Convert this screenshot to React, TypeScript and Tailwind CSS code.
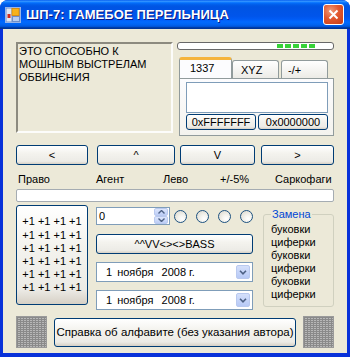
import React from 'react';

const BTN =
  'flex items-center justify-center rounded-[3px] border border-[#003c74] bg-[linear-gradient(180deg,#ffffff_0%,#f4f3ee_40%,#ecebe6_85%,#d6d0c5_100%)] text-black';

const CHECKER =
  'bg-[#8a8a8a] bg-[linear-gradient(90deg,#8a8a8a_1px,transparent_1px),linear-gradient(#8a8a8a_1px,transparent_1px)] bg-[size:3px_2px] bg-[color:#b8b8b8] border border-[#9a9a9a]';

function Radio() {
  return (
    <span className="w-[13px] h-[13px] rounded-full border border-[#1c5180] bg-[radial-gradient(circle_at_65%_70%,#ffffff_0%,#f4f3ee_35%,#d8d5c9_100%)]" />
  );
}

function Chevron() {
  return (
    <svg width="8" height="5" viewBox="0 0 8 5">
      <path d="M1 0.8 L4 3.8 L7 0.8" fill="none" stroke="#4d6185" strokeWidth="1.6" />
    </svg>
  );
}

function DateBox() {
  return (
    <div className="flex items-center h-[20px] border border-[#7f9db9] bg-white">
      <span className="pl-[9px]">1</span>
      <span className="ml-[5px]">ноября</span>
      <span className="ml-[8px]">2008 г.</span>
      <span className="ml-auto mr-[2px] w-[14px] h-[14px] rounded-[2px] border border-[#b9c9ef] bg-[linear-gradient(180deg,#d5e0fb,#b7c9f6)] flex items-center justify-center">
        <Chevron />
      </span>
    </div>
  );
}

export default function App() {
  const words = ['буковки', 'циферки', 'буковки', 'циферки', 'буковки', 'циферки'];
  return (
    <div className="w-[350px] h-[357px] font-['Liberation_Sans',sans-serif] text-[11px] leading-[13px] text-black">
      <div className="flex flex-col h-full rounded-t-[8px] overflow-hidden bg-[#0831d9]">
        {/* Title bar */}
        <div className="h-[29px] flex items-center px-[5px] bg-[linear-gradient(180deg,#0058ee_0%,#3593ff_4%,#288eff_6%,#127dff_8%,#036ffc_10%,#0262ee_14%,#0057e5_20%,#0054e3_24%,#0055eb_56%,#005bf5_66%,#026afe_76%,#0062ef_86%,#0052d6_92%,#0040ab_94%,#003092_100%)]">
          <svg width="16" height="16" viewBox="0 0 16 16" className="mt-[1px]">
            <rect x="0.5" y="0.5" width="15" height="15" fill="#6f8fc9" stroke="#9ab4e6" />
            <rect x="1.5" y="1.5" width="5" height="13" fill="#dfe6f3" />
            <rect x="2.5" y="7" width="3" height="4" fill="#d22a1e" />
            <rect x="7" y="1.5" width="7" height="7" fill="#f7b21c" stroke="#e08a00" strokeWidth="0.8" />
            <rect x="8" y="10" width="6" height="4" fill="#b9cdf0" />
          </svg>
          <span className="ml-[5px] text-white font-bold text-[13px] tracking-[0.1px] [text-shadow:1px_1px_#0a1883]">
            ШП-7: ГАМЕБОЕ ПЕРЕЛЬНИЦА
          </span>
          <div className="ml-auto mr-[1px] w-[21px] h-[21px] rounded-[3px] border border-white bg-[radial-gradient(circle_at_35%_30%,#f09a78_0%,#e2582f_45%,#c63c17_100%)] flex items-center justify-center">
            <svg width="11" height="11" viewBox="0 0 11 11">
              <path d="M1.5 1.5 L9.5 9.5 M9.5 1.5 L1.5 9.5" stroke="white" strokeWidth="2" />
            </svg>
          </div>
        </div>

        {/* Body */}
        <div className="flex-1 mx-[3px] mb-[4px] bg-[#ece9d8] pt-[13px] px-[13px]">
          {/* Row 1 */}
          <div className="flex h-[94px]">
            <div className="w-[157px] h-[91px] border-2 border-t-[#8c8a7f] border-l-[#8c8a7f] border-b-[#fcfcfa] border-r-[#fcfcfa] pl-[1px] pt-[1px] leading-[13px]">
              ЭТО СПОСОБНО К<br />МОШНЫМ ВЫСТРЕЛАМ<br />ОБВИНЄНИЯ
            </div>
            <div className="ml-[4px] w-[157px] flex flex-col">
              <div className="h-[8px] rounded-[3px] border border-[#686868] bg-white flex items-center pl-[99px] gap-[2px]">
                {[0, 1, 2, 3, 4].map((i) => (
                  <span key={i} className="w-[6px] h-[4px] bg-[#37d237]" />
                ))}
              </div>
              <div className="mt-[7px] flex items-end h-[21px] pl-[2px]">
                <div className="w-[53px] h-[21px] rounded-t-[3px] border-x border-[#919b9c] border-t-[3px] border-t-[#f5b43c] bg-[#fcfcfe] pl-[10px] pt-[2px] relative z-10">
                  1337
                </div>
                <div className="w-[47px] h-[18px] rounded-t-[3px] border border-b-0 border-[#919b9c] bg-[linear-gradient(180deg,#ffffff,#ecebe6)] pl-[8px] pt-[3px]">
                  XYZ
                </div>
                <div className="ml-[2px] w-[47px] h-[18px] rounded-t-[3px] border border-b-0 border-[#919b9c] bg-[linear-gradient(180deg,#ffffff,#ecebe6)] pl-[6px] pt-[3px]">
                  -/+
                </div>
              </div>
              <div className="ml-[2px] w-[155px] h-[58px] border border-[#919b9c] bg-[linear-gradient(180deg,#fcfcfe,#f4f3ee)] pl-[6px] pt-[3px]">
                <div className="w-[142px] h-[31px] border border-[#7f9db9] bg-white" />
                <div className="mt-[1px] flex gap-[2px]">
                  <div className={`${BTN} w-[70px] h-[16px]`}>0xFFFFFFF</div>
                  <div className={`${BTN} w-[70px] h-[16px]`}>0x0000000</div>
                </div>
              </div>
            </div>
          </div>

          {/* Row 2 */}
          <div className="mt-[9px] flex h-[20px]">
            <div className={`${BTN} w-[72px]`}>&lt;</div>
            <div className={`${BTN} w-[78px] ml-[9px]`}>^</div>
            <div className={`${BTN} w-[75px] ml-[5px]`}>V</div>
            <div className={`${BTN} w-[73px] ml-[6px]`}>&gt;</div>
          </div>

          {/* Labels */}
          <div className="mt-[8px] flex h-[13px] pl-[2px]">
            <span className="w-[78px]">Право</span>
            <span className="w-[67px]">Агент</span>
            <span className="w-[57px]">Лево</span>
            <span className="w-[55px]">+/-5%</span>
            <span>Саркофаги</span>
          </div>

          <div className="mt-[3px] h-[13px] rounded-[2px] border border-[#a5acb2] bg-white" />

          {/* Row 5 */}
          <div className="mt-[3px] flex">
            <div className={`${BTN} w-[72px] h-[100px] flex-col`}>
              {[0, 1, 2, 3, 4, 5].map((i) => (
                <span key={i} className="leading-[13.2px] whitespace-pre">+1 +1 +1 +1</span>
              ))}
            </div>

            <div className="ml-[8px] w-[157px] pt-[2px]">
              <div className="flex items-center h-[18px]">
                <div className="w-[74px] h-[18px] border border-[#7f9db9] bg-white flex items-center">
                  <span className="pl-[2px]">0</span>
                  <div className="ml-auto mr-[1px] flex flex-col w-[14px] h-[16px]">
                    <span className="flex-1 rounded-[2px] border border-[#b9c9ef] bg-[linear-gradient(180deg,#dde6fc,#bccdf6)] flex items-center justify-center">
                      <svg width="7" height="4" viewBox="0 0 7 4"><path d="M0.5 3.5 L3.5 0.5 L6.5 3.5" fill="none" stroke="#4d6185" strokeWidth="1.4" /></svg>
                    </span>
                    <span className="flex-1 rounded-[2px] border border-[#b9c9ef] bg-[linear-gradient(180deg,#dde6fc,#bccdf6)] flex items-center justify-center">
                      <svg width="7" height="4" viewBox="0 0 7 4"><path d="M0.5 0.5 L3.5 3.5 L6.5 0.5" fill="none" stroke="#4d6185" strokeWidth="1.4" /></svg>
                    </span>
                  </div>
                </div>
                <div className="ml-[4px] flex gap-[9px]">
                  <Radio />
                  <Radio />
                  <Radio />
                  <Radio />
                </div>
              </div>
              <div className={`${BTN} mt-[9px] h-[20px]`}>^^VV&lt;&gt;&lt;&gt;BASS</div>
              <div className="mt-[8px]"><DateBox /></div>
              <div className="mt-[8px]"><DateBox /></div>
            </div>

            <fieldset className="ml-[10px] mt-[3px] w-[71px] h-[99px] rounded-[3px] border border-[#d0d0bf] pl-[7px]">
              <legend className="px-[1px] text-[#0046d5] leading-[13px]">Замена</legend>
              <div className="pt-[2px]">
                {words.map((w, i) => (
                  <div key={i} className="leading-[13px]">{w}</div>
                ))}
              </div>
            </fieldset>
          </div>

          {/* Row 6 */}
          <div className="mt-[6px] flex items-center h-[32px]">
            <div className={`w-[31px] h-[32px] ${CHECKER}`} />
            <div className={`${BTN} ml-[7px] w-[242px] h-[29px] text-[11.5px] whitespace-nowrap`}>
              Справка об алфавите (без указания автора)
            </div>
            <div className={`ml-[7px] w-[31px] h-[32px] ${CHECKER}`} />
          </div>
        </div>
      </div>
    </div>
  );
}
